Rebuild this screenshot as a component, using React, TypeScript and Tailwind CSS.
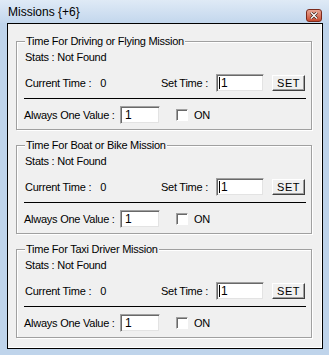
const font = { fontFamily: '"Liberation Sans", Arial, sans-serif' };

type MissionProps = {
    title: string;
};

function SunkenInput({ width, caret }: { width: string; caret?: boolean }) {
    return (
        <div
            className={`${width} h-[18px] bg-white border border-t-[#a0a0a0] border-l-[#a0a0a0] border-b-[#f0f0f0] border-r-[#f0f0f0] shadow-[inset_1px_1px_0_#696969,inset_-1px_-1px_0_#e3e3e3] flex items-end pb-[2px] pl-[4px] text-[12px] leading-none text-black`}
        >
            {caret ? <span className="border-l border-black pl-[1px] -ml-[2px]">1</span> : '1'}
        </div>
    );
}

function MissionGroup({ title }: MissionProps) {
    return (
        <div className="relative mx-[8px] mr-[10px] border border-[#a0a0a0] shadow-[1px_1px_0_#ffffff,inset_1px_1px_0_#ffffff] pb-[5px]">
            <span className="absolute left-[8px] top-[-7px] bg-[#f0f0f0] px-[1px] text-[11px] leading-[13px] tracking-[-0.25px]">
                {title}
            </span>
            <div className="pl-[8px] pt-[9px] text-[11px] leading-[13px] tracking-[-0.25px]">Stats : Not Found</div>
            <div className="mt-[10px] flex h-[18px] items-center pl-[8px] text-[11px] tracking-[-0.25px]">
                <div className="flex w-[136px] gap-[9px]">
                    <span>Current Time :</span>
                    <span>0</span>
                </div>
                <span className="w-[55px]">Set Time :</span>
                <SunkenInput width="w-[48px]" caret />
                <button
                    type="button"
                    className="ml-[8px] h-[16px] w-[33px] self-start mt-[1px] bg-[#f0f0f0] border border-t-white border-l-white border-b-[#404040] border-r-[#404040] shadow-[inset_-1px_-1px_0_#a0a0a0] text-[11px] leading-none tracking-[0.5px]"
                >
                    SET
                </button>
            </div>
            <div className="ml-[7px] mr-[5px] mt-[6px] h-px bg-black" />
            <div className="mt-[7px] flex h-[18px] items-center pl-[7px] text-[11px] tracking-[-0.25px]">
                <span className="w-[96px]">Always One Value :</span>
                <SunkenInput width="w-[40px]" />
                <div className="ml-[16px] h-[12px] w-[12px] bg-white border border-t-[#a0a0a0] border-l-[#a0a0a0] border-b-white border-r-white shadow-[inset_1px_1px_0_#696969]" />
                <span className="ml-[6px]">ON</span>
            </div>
        </div>
    );
}

export default function App() {
    return (
        <div style={font} className="flex h-[355px] w-[329px] flex-col bg-[#bfd4eb] text-black">
            <div className="flex h-[23px] items-start justify-between bg-gradient-to-b from-[#dfeaf6] to-[#c3d7ed] pl-[8px] pr-[7px]">
                <span className="mt-[5px] text-[12px] leading-[14px]">Missions {'{'}+6{'}'}</span>
                <div className="mt-[9px] flex h-[13px] w-[16px] items-center justify-center rounded-[3px] border border-[#7a2a1c] bg-gradient-to-b from-[#e8a493] to-[#c7482c]">
                    <svg width="8" height="7" viewBox="0 0 8 7">
                        <path d="M1 0.5 L7 6.5 M7 0.5 L1 6.5" stroke="#3a1a14" strokeWidth="2.6" />
                        <path d="M1 0.5 L7 6.5 M7 0.5 L1 6.5" stroke="#ffffff" strokeWidth="1.4" />
                    </svg>
                </div>
            </div>
            <div className="flex flex-1 pl-[7px] pr-[6px] pb-[6px]">
                <div className="flex flex-1 flex-col gap-[15px] border border-black bg-[#f0f0f0] pt-[17px] shadow-[inset_-1px_-1px_0_#ffffff]">
                    <MissionGroup title="Time For Driving or Flying Mission" />
                    <MissionGroup title="Time For Boat or Bike Mission" />
                    <MissionGroup title="Time For Taxi Driver Mission" />
                </div>
            </div>
        </div>
    );
}
